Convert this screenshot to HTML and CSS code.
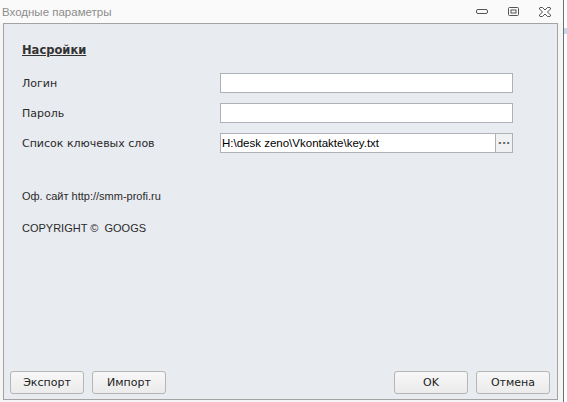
FILE: index.html
```html
<!DOCTYPE html>
<html lang="ru">
<head>
  <meta charset="UTF-8" />
  <title>Входные параметры</title>
  <link rel="stylesheet" href="styles.css">
</head>
<body>

  <div class="window">
    <!-- Title bar -->
    <div class="titlebar">
      <span class="title">Входные параметры</span>
      <div class="controls">
        <svg width="12" height="6" viewBox="0 0 12 6"><rect x="0.5" y="0.5" width="11" height="4" rx="1.5" fill="none" stroke="#555"/></svg>
        <svg width="11" height="9" viewBox="0 0 11 9"><rect x="0.5" y="0.5" width="10" height="8" rx="1" fill="none" stroke="#555"/><rect x="3" y="3" width="5" height="3" fill="none" stroke="#555"/></svg>
        <svg width="12" height="10" viewBox="0 0 12 10"><path d="M1 0.5 L3.5 0.5 L6 3 L8.5 0.5 L11 0.5 L11.5 1 L11.5 2 L8.5 5 L11.5 8 L11.5 9 L11 9.5 L8.5 9.5 L6 7 L3.5 9.5 L1 9.5 L0.5 9 L0.5 8 L3.5 5 L0.5 2 L0.5 1 Z" fill="none" stroke="#555"/></svg>
      </div>
    </div>

    <!-- Settings panel -->
    <div class="panel">
      <div class="heading">Насройки</div>

      <div class="form">
        <label>Логин</label>
        <div class="field"></div>

        <label>Пароль</label>
        <div class="field"></div>

        <label>Список ключевых слов</label>
        <div class="field file">
          <span class="value">H:\desk zeno\Vkontakte\key.txt</span>
          <span class="browse">···</span>
        </div>
      </div>

      <div class="info">Оф. сайт http://smm-profi.ru</div>
      <div class="info">COPYRIGHT ©&nbsp; GOOGS</div>

      <div class="buttons">
        <div class="group">
          <button>Экспорт</button>
          <button>Импорт</button>
        </div>
        <div class="group">
          <button>OK</button>
          <button>Отмена</button>
        </div>
      </div>
    </div>
  </div>

  <div class="edge"><span class="mark"></span></div>

</body>
</html>
```

FILE: styles.css
```css
* {
  box-sizing: border-box;
}

body {
  margin: 0;
  width: 567px;
  height: 402px;
  display: flex;
  background: #fff;
  font-family: Tahoma, "DejaVu Sans", sans-serif;
  font-size: 11px;
  color: #1e1e1e;
  overflow: hidden;
}

.window {
  width: 564px;
  height: 402px;
  background: #f5f5f5;
  border-right: 1px solid #6f6f6f;
  display: flex;
  flex-direction: column;
  padding: 0 5px 2px 3px;
}

.edge {
  flex: 1;
  background: #fff;
  padding-top: 28px;
}

.edge .mark {
  display: block;
  height: 6px;
  background: #bcd9ee;
}

/* Title bar */
.titlebar {
  height: 23px;
  display: flex;
  align-items: center;
  justify-content: space-between;
  background: #fafafa;
  margin: 0 -5px 0 -3px;
  padding: 0 12px 0 2px;
}

.title {
  color: #8c8c8c;
  font-family: "Liberation Sans", Arial, sans-serif;
  font-size: 11.5px;
}

.controls {
  display: flex;
  align-items: center;
  gap: 20px;
}

/* Panel */
.panel {
  flex: 1;
  background: #e8ebf0;
  border: 1px solid #a3a3a3;
  display: flex;
  flex-direction: column;
  padding: 19px 44px 5px 18px;
}

.heading {
  font-weight: bold;
  font-size: 11.5px;
  text-decoration: underline;
  color: #333;
  margin-bottom: 16px;
}

.form {
  display: grid;
  grid-template-columns: 198px 1fr;
  row-gap: 10px;
  align-items: center;
}

.form label {
  color: #2a2a2a;
}

.field {
  height: 20px;
  background: #fff;
  border: 1px solid #aeb1b5;
}

.field.file {
  display: flex;
  align-items: center;
}

.field .value {
  flex: 1;
  padding-left: 1px;
  color: #000;
  font-family: "Liberation Sans", Arial, sans-serif;
  font-size: 11.5px;
}

.field .browse {
  width: 17px;
  height: 100%;
  border-left: 1px solid #aeb1b5;
  background: #f0f1f3;
  display: flex;
  align-items: center;
  justify-content: center;
  font-weight: bold;
  color: #666;
  letter-spacing: 0;
}

.info {
  color: #2a2a2a;
  font-family: "Liberation Sans", Arial, sans-serif;
  font-size: 11px;
  margin-top: 37px;
}

.info + .info {
  margin-top: 20px;
}

/* Bottom buttons */
.buttons {
  margin-top: auto;
  margin-left: -12px;
  margin-right: -37px;
  display: flex;
  justify-content: space-between;
}

.group {
  display: flex;
  gap: 8px;
}

.buttons button {
  width: 74px;
  height: 23px;
  font-family: inherit;
  font-size: 11px;
  color: #222;
  border: 1px solid #b5b5b5;
  border-radius: 3px;
  background: linear-gradient(#f7f7f7, #ebebeb);
  padding: 0;
}
```
